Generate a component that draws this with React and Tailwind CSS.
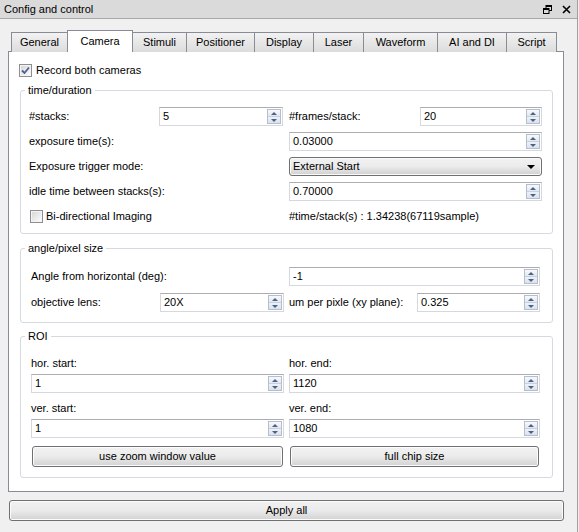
import React from "react";

const Arrows = () => (
  <div className="mr-[1px] flex h-[15px] w-[14px] flex-col border border-[#b5bfcc]">
    <div className="flex flex-1 items-center justify-center border-b border-[#c7d0dc] bg-gradient-to-b from-[#f7f9fc] to-[#e3e9f1]">
      <div className="h-0 w-0 border-x-[3px] border-b-[3px] border-x-transparent border-b-[#4d6185]" />
    </div>
    <div className="flex flex-1 items-center justify-center bg-gradient-to-b from-[#eef2f7] to-[#dbe2ec]">
      <div className="h-0 w-0 border-x-[3px] border-t-[3px] border-x-transparent border-t-[#4d6185]" />
    </div>
  </div>
);

const Spin = ({ value, w }) => (
  <div
    className={`flex h-[19px] items-center border border-[#d5d8de] border-t-[#abadb3] bg-white ${w}`}
  >
    <span className="flex-1 pl-[3px] leading-none">{value}</span>
    <Arrows />
  </div>
);

const Button = ({ children, className }) => (
  <div
    className={`flex h-[21px] items-center justify-center rounded-[3px] border border-[#707070] bg-gradient-to-b from-[#f2f2f2] via-[#ebebeb] to-[#d2d2d2] shadow-[inset_0_0_0_1px_#fcfcfc] ${className}`}
  >
    {children}
  </div>
);

const Check = ({ checked }) => (
  <div className="flex h-[13px] w-[13px] shrink-0 items-center justify-center border border-[#8f8f8f] bg-white">
    <div className="flex h-[11px] w-[11px] items-center justify-center border border-[#f4f4f4] bg-gradient-to-br from-[#d8d8d8] to-[#fbfbfb]">
      {checked && (
        <svg width="9" height="9" viewBox="0 0 9 9">
          <path d="M1 4.5 L3.5 7 L8 1.5" fill="none" stroke="#4a5f97" strokeWidth="1.8" />
        </svg>
      )}
    </div>
  </div>
);

const tabs = [
  ["General", "w-[57px]"],
  ["Camera", "w-[66px]"],
  ["Stimuli", "w-[55px]"],
  ["Positioner", "w-[69px]"],
  ["Display", "w-[60px]"],
  ["Laser", "w-[51px]"],
  ["Waveform", "w-[75px]"],
  ["AI and DI", "w-[70px]"],
  ["Script", "w-[51px]"],
];

export default function App() {
  return (
    <div className="h-[532px] w-[579px] overflow-hidden bg-[#f0f0f0] text-[11px] leading-none text-black font-['Liberation_Sans',Arial,sans-serif]">
      <div className="h-[532px] w-[578px] border-r border-[#a0a0a0]">
        {/* Title bar */}
        <div className="flex h-[19px] items-center justify-between border-b border-[#a8a8a8] bg-[#dadada] pl-[4px] pr-[6px]">
          <span>Config and control</span>
          <div className="flex items-center gap-[10px]">
            <svg width="9" height="9" viewBox="0 0 9 9">
              <rect x="3" y="0.5" width="5.5" height="5" fill="none" stroke="#000" />
              <rect x="3" y="0" width="6" height="2" fill="#000" />
              <rect x="0.5" y="3.5" width="5.5" height="5" fill="#dadada" stroke="#000" />
              <rect x="0" y="3" width="6" height="2" fill="#000" />
            </svg>
            <svg width="9" height="9" viewBox="0 0 9 9">
              <path d="M1 1 L8 8 M8 1 L1 8" stroke="#000" strokeWidth="1.6" />
            </svg>
          </div>
        </div>

        {/* Tabs */}
        <div className="mt-[11px] flex h-[22px] items-end pl-[11px]">
          {tabs.map(([name, w], i) => {
            const sel = name === "Camera";
            return (
              <div
                key={name}
                className={`${w} ${i > 0 ? "-ml-px" : ""} ${
                  sel
                    ? "relative z-10 h-[22px] bg-white"
                    : "h-[20px] bg-gradient-to-b from-[#f2f2f2] to-[#dcdcdc]"
                } flex items-center justify-center border border-b-0 border-[#898c95]`}
              >
                {name}
              </div>
            );
          })}
        </div>

        {/* Pane */}
        <div className="-mt-px ml-[8px] h-[441px] w-[556px] border border-[#898c95] bg-white pt-[11px]">
          <div className="ml-[10px] flex h-[14px] items-center gap-[4px]">
            <Check checked />
            <span>Record both cameras</span>
          </div>

          {/* time/duration */}
          <fieldset className="ml-[11px] mt-[6px] w-[533px] rounded-[3px] border border-[#d5dae0] pb-[7px] pl-[8px] pr-[10px] pt-[10px]">
            <legend className="-ml-[4px] px-[3px] leading-[14px]">time/duration</legend>
            <div className="flex flex-col gap-[6px]">
              <div className="flex h-[19px] items-center">
                <span className="w-[130px]">#stacks:</span>
                <Spin value="5" w="w-[124px]" />
                <span className="ml-[6px] w-[131px]">#frames/stack:</span>
                <Spin value="20" w="w-[122px]" />
              </div>
              <div className="flex h-[19px] items-center">
                <span className="w-[260px]">exposure time(s):</span>
                <Spin value="0.03000" w="w-[253px]" />
              </div>
              <div className="flex h-[19px] items-center">
                <span className="w-[260px]">Exposure trigger mode:</span>
                <div className="flex h-[19px] w-[253px] items-center justify-between rounded-[3px] border border-[#707070] bg-gradient-to-b from-[#f2f2f2] via-[#ebebeb] to-[#d0d0d0] pl-[3px] pr-[6px] shadow-[inset_0_0_0_1px_#fafafa]">
                  <span>External Start</span>
                  <div className="h-0 w-0 border-x-[4px] border-t-[4px] border-x-transparent border-t-black" />
                </div>
              </div>
              <div className="flex h-[19px] items-center">
                <span className="w-[260px]">idle time between stacks(s):</span>
                <Spin value="0.70000" w="w-[253px]" />
              </div>
              <div className="flex h-[19px] items-center">
                <div className="ml-[1px] flex w-[259px] items-center gap-[3px]">
                  <Check />
                  <span>Bi-directional Imaging</span>
                </div>
                <span>#time/stack(s) : 1.34238(67119sample)</span>
              </div>
            </div>
          </fieldset>

          {/* angle/pixel size */}
          <fieldset className="ml-[11px] mt-[7px] w-[533px] rounded-[3px] border border-[#d5dae0] pb-[10px] pl-[10px] pr-[12px] pt-[12px]">
            <legend className="-ml-[6px] px-[3px] leading-[14px]">angle/pixel size</legend>
            <div className="flex flex-col gap-[7px]">
              <div className="flex h-[19px] items-center">
                <span className="w-[258px]">Angle from horizontal (deg):</span>
                <Spin value="-1" w="w-[251px]" />
              </div>
              <div className="flex h-[19px] items-center">
                <span className="w-[129px]">objective lens:</span>
                <Spin value="20X" w="w-[124px]" />
                <span className="ml-[5px] w-[128px]">um per pixle (xy plane):</span>
                <Spin value="0.325" w="w-[123px]" />
              </div>
            </div>
          </fieldset>

          {/* ROI */}
          <fieldset className="ml-[11px] mt-[6px] w-[533px] rounded-[3px] border border-[#d5dae0] pb-[10px] pl-[10px] pr-[12px] pt-[13px]">
            <legend className="-ml-[6px] px-[3px] leading-[14px]">ROI</legend>
            <div className="grid grid-cols-[253px_251px] gap-x-[5px]">
              <span className="flex h-[14px] items-center">hor. start:</span>
              <span className="flex h-[14px] items-center">hor. end:</span>
              <div className="mt-[4px]">
                <Spin value="1" w="w-[253px]" />
              </div>
              <div className="mt-[4px]">
                <Spin value="1120" w="w-[251px]" />
              </div>
              <span className="mt-[8px] flex h-[14px] items-center">ver. start:</span>
              <span className="mt-[8px] flex h-[14px] items-center">ver. end:</span>
              <div className="mt-[4px]">
                <Spin value="1" w="w-[253px]" />
              </div>
              <div className="mt-[4px]">
                <Spin value="1080" w="w-[251px]" />
              </div>
              <Button className="mx-[1px] mt-[8px]">use zoom window value</Button>
              <Button className="mx-[1px] mt-[8px]">full chip size</Button>
            </div>
          </fieldset>
        </div>

        <Button className="ml-[9px] mt-[8px] w-[555px]">Apply all</Button>
      </div>
    </div>
  );
}
